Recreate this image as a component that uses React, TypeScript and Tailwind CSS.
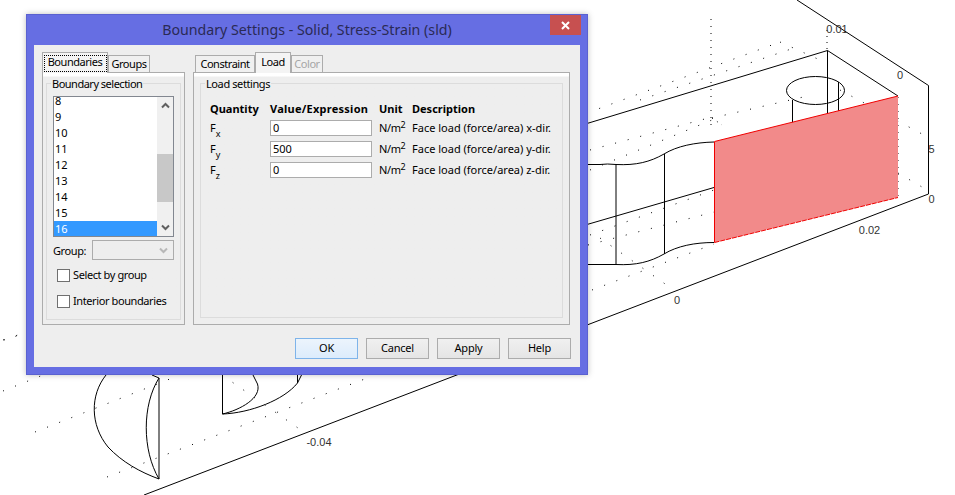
const rows = ["8", "9", "10", "11", "12", "13", "14", "15", "16"];

const loads = [
  { sym: "x", value: "0", desc: "Face load (force/area) x-dir." },
  { sym: "y", value: "500", desc: "Face load (force/area) y-dir." },
  { sym: "z", value: "0", desc: "Face load (force/area) z-dir." },
];

function Chevron({ up, color = "#606060" }: { up?: boolean; color?: string }) {
  return (
    <svg width="9" height="7" viewBox="0 0 9 7" fill="none">
      <path d={up ? "M1 5.5 L4.5 2 L8 5.5" : "M1 1.5 L4.5 5 L8 1.5"} stroke={color} strokeWidth="2" />
    </svg>
  );
}

function Scene() {
  return (
    <svg width="955" height="495" viewBox="0 0 955 495" fill="none" className="block bg-white">
      <g stroke="#000" strokeWidth="1" strokeDasharray="1 12">
        <path d="M711 19 V125" strokeDasharray="1 6" />
        <path d="M587 113 L780 42" />
        <path d="M640 100 L800 46" />
        <path d="M590 150 L712 117" />
        <path d="M712 118 L812 95" />
        <path d="M712 118 L722 125" strokeDasharray="1 5" />
        <path d="M590 170 L712 120" />
        <path d="M827 30 V50" strokeDasharray="1 5" />
        <path d="M780 42 L820 60" />
        <path d="M840 90 L922 134" />
        <path d="M898 97 V200" strokeDasharray="1 6" />
        <path d="M898 173 L922 187" />
        <path d="M590 235 L714 190" />
        <path d="M588 245 L714 212" />
        <path d="M592 290 L714 244" />
        <path d="M600 238 L668 286" />
        <path d="M3 340 L20 335" />
        <path d="M3 391 L43 375" />
        <path d="M35 432 L180 375" />
        <path d="M107 477 L370 377" />
        <path d="M222 375 L298 428" />
        <path d="M4 340 L26 332" />
      </g>
      <g stroke="#000" strokeWidth="1">
        <path d="M797 0 L928.5 85.5 V194 L144 495" />
        <path d="M587 123.5 L827.5 50.5 L898 96" />
        <path d="M827.5 50.5 V115" />
        <ellipse cx="815.5" cy="90.5" rx="29" ry="14" />
        <path d="M792.5 100 V124 M838.5 82 V112" />
        <path d="M587 164.5 H600 Q607 163.5 616 164.5 C636 165.5 650 162 664 154 C677 146 695 142.5 714 142" />
        <path d="M587 264.5 H616 C636 265.5 650 262 664 254 C677 246 695 242.5 714 242.5" />
        <path d="M616 164.5 V264.5 M664.5 154 V254 M587 224.5 L714 187.5" />
        <path d="M106 375 C90 395 90 425 108 447 C122 462 140 472 159 479" />
        <path d="M159 378 C142 405 142 450 159 479 M152 375 L159 378 M159 378 V479" />
        <path d="M222.5 375 V414 C240 410 262 398 257.5 384 L253 375" />
        <path d="M222.5 414 C250 413 284 400 297.5 383 V375 M297.5 383 L301.5 375" />
      </g>
      <path d="M714.5 141.5 L898 96 V197.5 L714.5 242.5 Z" fill="#f28a8a" />
      <path d="M714.5 242.5 V141.5 L898 96" stroke="#f00000" strokeWidth="1" />
      <path d="M714.5 242.5 L898 197.5" stroke="#f00000" strokeWidth="1" strokeDasharray="5 1" />
      <g fill="#333" fontSize="11" fontFamily="'Liberation Sans', sans-serif" textAnchor="middle">
        <text x="837" y="33">0.01</text>
        <text x="900" y="79">0</text>
        <text x="931.5" y="153">5</text>
        <text x="931.5" y="203">0</text>
        <text x="869.5" y="234">0.02</text>
        <text x="677" y="304">0</text>
        <text x="319" y="446">-0.04</text>
      </g>
    </svg>
  );
}

function Tab({ label, active, disabled, focus, w }: { label: string; active?: boolean; disabled?: boolean; focus?: boolean; w: string }) {
  return (
    <div
      className={`${w} flex items-center justify-center border border-b-0 border-[#acacac] tracking-[-0.45px] ${
        active ? "h-[21px] -mb-px bg-[#f4f4f4] z-10 pb-[2px]" : "h-[17px] bg-[#f0f0f0]"
      } ${disabled ? "text-[#a6a6a6]" : "text-black"}`}
    >
      {focus ? (
        <span className="w-[61px] h-[15px] mt-[3px] text-center leading-[11px] outline-1 outline-dotted outline-black">
          {label}
        </span>
      ) : (
        label
      )}
    </div>
  );
}

function Button({ label, primary }: { label: string; primary?: boolean }) {
  return (
    <button
      className={`w-[63px] h-[21px] border pb-[1px] tracking-[-0.2px] text-black ${
        primary
          ? "border-[#7eb4ea] bg-gradient-to-b from-[#ecf4fc] to-[#dcecfc]"
          : "border-[#acacac] bg-gradient-to-b from-[#f0f0f0] to-[#e5e5e5]"
      }`}
    >
      {label}
    </button>
  );
}

function Check({ label, mt }: { label: string; mt: string }) {
  return (
    <div className={`flex items-center gap-[3px] pl-[4px] tracking-[-0.4px] ${mt}`}>
      <div className="w-[13px] h-[13px] border border-[#707070] bg-white" />
      <span>{label}</span>
    </div>
  );
}

export default function App() {
  return (
    <div className="relative w-[955px] h-[495px] overflow-hidden bg-white">
      <Scene />
      <div
        className="absolute left-[26px] top-[14px] w-[562px] h-[361px] border border-[#5a61d0] bg-[#666ee3] shadow-[0_0_6px_rgba(0,0,0,0.25)] flex flex-col text-[11px] leading-[14px] text-black"
        style={{ fontFamily: "'Noto Sans', Tahoma, sans-serif" }}
      >
        <div className="relative h-[30px] shrink-0 flex items-center justify-center text-[14.2px] text-[#2a2a55]">
          Boundary Settings - Solid, Stress-Strain (sld)
          <div className="absolute right-[6px] top-0 w-[31px] h-[20px] bg-[#c75050] flex items-center justify-center">
            <svg width="9" height="9" viewBox="0 0 9 9" fill="none">
              <path d="M1 1 L8 8 M8 1 L1 8" stroke="#fff" strokeWidth="2" />
            </svg>
          </div>
        </div>

        <div className="mx-[7px] mb-[7px] flex-1 bg-[#eeeeee] flex flex-col pt-[7px] pl-[8px] pr-[9px]">
          <div className="flex gap-[8px]">
            {/* boundaries panel */}
            <div className="w-[143px] flex flex-col">
              <div className="flex items-end h-[20px]">
                <Tab label="Boundaries" active focus w="w-[66px]" />
                <Tab label="Groups" w="w-[42px]" />
              </div>
              <div className="h-[253px] border border-[#acacac] bg-gradient-to-b from-white from-[3px] to-[#eeeeee] to-[4px] px-[3px]">
                <fieldset className="h-[245px] border border-[#dcdcdc] px-[6px] mt-[2px]">
                  <legend className="px-[1px] pt-[2px] -ml-[2px] tracking-[-0.5px]">Boundary selection</legend>
                  <div className="mt-[5px] w-[121px] h-[141px] border border-[#828790] bg-white flex overflow-hidden">
                    <div className="flex-1 overflow-hidden">
                      <div className="-mt-[4px]">
                        {rows.map((r) => (
                          <div
                            key={r}
                            className={`h-[16px] pl-[1px] leading-[16px] ${r === "16" ? "bg-[#3399ff] text-white" : ""}`}
                          >
                            {r}
                          </div>
                        ))}
                      </div>
                    </div>
                    <div className="w-[16px] flex flex-col bg-[#f0f0f0]">
                      <div className="h-[17px] flex items-center justify-center">
                        <Chevron up />
                      </div>
                      <div className="flex-1 pt-[40px]">
                        <div className="h-[48px] bg-[#c8c8c8]" />
                      </div>
                      <div className="h-[17px] flex items-center justify-center">
                        <Chevron />
                      </div>
                    </div>
                  </div>
                  <div className="flex items-center mt-[3px] h-[20px]">
                    <span className="w-[39px] pt-[1px] tracking-[-0.4px]">Group:</span>
                    <div className="w-[82px] h-[20px] border border-[#acacac] flex items-center justify-end pr-[5px]">
                      <Chevron color="#b8b8b8" />
                    </div>
                  </div>
                  <Check label="Select by group" mt="mt-[8px]" />
                  <Check label="Interior boundaries" mt="mt-[12px]" />
                </fieldset>
              </div>
            </div>

            {/* load panel */}
            <div className="w-[377px] flex flex-col">
              <div className="flex items-end h-[20px] pl-[2px]">
                <Tab label="Constraint" w="w-[60px]" />
                <Tab label="Load" active w="w-[36px]" />
                <Tab label="Color" disabled w="w-[32px]" />
              </div>
              <div className="h-[253px] border border-[#acacac] bg-gradient-to-b from-white from-[3px] to-[#eeeeee] to-[4px] px-[6px]">
                <fieldset className="h-[243px] border border-[#dcdcdc] pl-[9px] mt-[2px]">
                  <legend className="px-[1px] pt-[2px] -ml-[5px] tracking-[-0.4px]">Load settings</legend>
                  <div className="grid grid-cols-[60px_109px_33px_1fr] mt-[11px] items-center font-bold h-[14px]">
                    <span>Quantity</span>
                    <span className="tracking-[0.25px]">Value/Expression</span>
                    <span>Unit</span>
                    <span>Description</span>
                  </div>
                  <div className="mt-[4px] flex flex-col gap-[5px]">
                    {loads.map((l) => (
                      <div key={l.sym} className="grid grid-cols-[60px_109px_33px_1fr] items-center h-[16px]">
                        <span>
                          F<sub className="text-[9px] align-sub">{l.sym}</sub>
                        </span>
                        <div className="w-[102px] h-[16px] border border-[#acacac] bg-white pl-[2px] leading-[14px]">{l.value}</div>
                        <span className="tracking-[-0.4px]">
                          N/m<sup className="text-[9px]">2</sup>
                        </span>
                        <span>{l.desc}</span>
                      </div>
                    ))}
                  </div>
                </fieldset>
              </div>
            </div>
          </div>

          <div className="flex justify-end gap-[8px] mt-[13px]">
            <Button label="OK" primary />
            <Button label="Cancel" />
            <Button label="Apply" />
            <Button label="Help" />
          </div>
        </div>
      </div>
    </div>
  );
}
